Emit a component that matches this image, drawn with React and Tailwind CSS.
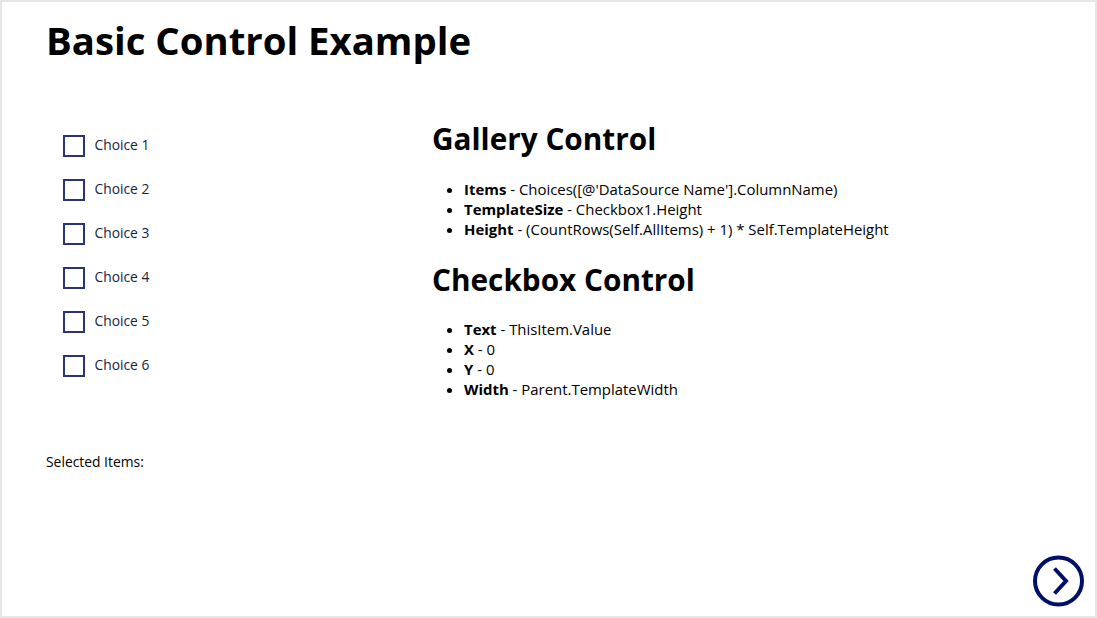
const choices = [1, 2, 3, 4, 5, 6];

const gallery = [
  ["Items", "Choices([@'DataSource Name'].ColumnName)"],
  ["TemplateSize", "Checkbox1.Height"],
  ["Height", "(CountRows(Self.AllItems) + 1) * Self.TemplateHeight"],
];
const checkbox = [
  ["Text", "ThisItem.Value"],
  ["X", "0"],
  ["Y", "0"],
  ["Width", "Parent.TemplateWidth"],
];

function Props({ items }) {
  return (
    <ul className="list-disc pl-[32px] text-[14.93px] leading-[20px] text-[#000]">
      {items.map(([k, v]) => (
        <li key={k}>
          <b className="font-bold">{k}</b> - {v}
        </li>
      ))}
    </ul>
  );
}

export default function App() {
  return (
    <div
      className="w-[1097px] h-[618px] relative overflow-hidden bg-white border-2 border-[#e6e6e6] text-black flex flex-col"
      style={{ fontFamily: '"Open Sans", sans-serif' }}
    >
      <h1 className="text-[38.33px] leading-[50px] font-bold ml-[44px] mt-[13px]">Basic Control Example</h1>
      <div className="flex mt-[54px]">
        <div className="w-[430px] shrink-0 pl-[61px]">
          <div className="flex flex-col pt-[5px]">
            {choices.map((n) => (
              <div key={n} className="h-[44px] flex items-center gap-[9.5px]">
                <span className="w-[22px] h-[22px] border-2 border-[#2a3375] box-border" />
                <span className="text-[13.8px] leading-[20px] text-[#16233f] -mt-[2px]">Choice {n}</span>
              </div>
            ))}
          </div>
        </div>
        <div>
          <h2 className="text-[29.75px] leading-[40px] font-bold mb-[20px]">Gallery Control</h2>
          <Props items={gallery} />
          <h2 className="text-[29.75px] leading-[40px] font-bold mt-[21px] mb-[19px]">Checkbox Control</h2>
          <Props items={checkbox} />
        </div>
      </div>
      <div className="ml-[44px] mt-[53px] text-[13.87px] leading-[20px]">Selected Items:</div>
      <button className="absolute right-[11px] bottom-[9px] w-[52px] h-[52px]" aria-label="Next">
        <svg viewBox="0 0 52 52" className="w-[52px] h-[52px]" fill="none" stroke="#000f6b">
          <circle cx="26.5" cy="26" r="23.5" strokeWidth="4" />
          <path d="M22.5 13.5 L34 26 L22.5 38.5" strokeWidth="4" />
        </svg>
      </button>
    </div>
  );
}
